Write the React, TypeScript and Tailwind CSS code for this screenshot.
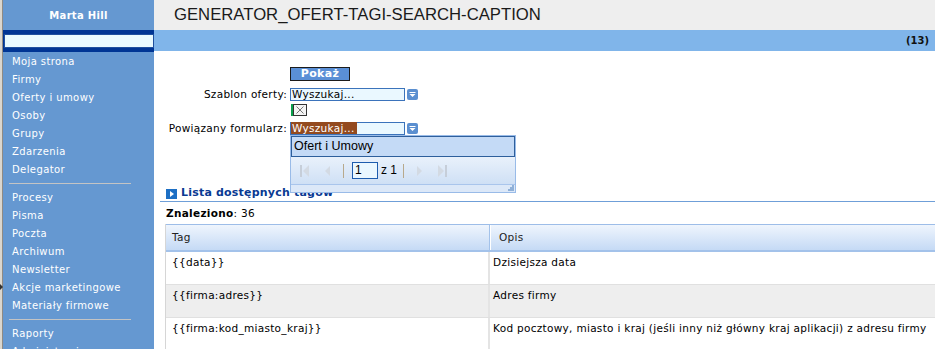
const sans = "font-['DejaVu_Sans',Verdana,sans-serif]";

const menu1 = ["Moja strona", "Firmy", "Oferty i umowy", "Osoby", "Grupy", "Zdarzenia", "Delegator"];
const menu2 = ["Procesy", "Pisma", "Poczta", "Archiwum", "Newsletter", "Akcje marketingowe", "Materiały firmowe"];
const menu3 = ["Raporty", "Administracja"];

const rows = [
  { tag: "{{data}}", opis: "Dzisiejsza data", bg: "bg-white" },
  { tag: "{{firma:adres}}", opis: "Adres firmy", bg: "bg-[#eeeeee]" },
  {
    tag: "{{firma:kod_miasto_kraj}}",
    opis: "Kod pocztowy, miasto i kraj (jeśli inny niż główny kraj aplikacji) z adresu firmy",
    bg: "bg-white",
  },
];

const MenuItem = ({ label }: { label: string }) => (
  <div className="h-[18px] shrink-0 flex items-center pl-[9px] text-white text-[10px] tracking-[0.4px]">{label}</div>
);

const Separator = () => (
  <div className="h-[10px] shrink-0 flex items-center">
    <div className="ml-[6px] w-[122px] h-px bg-[#c4c4c4]" />
  </div>
);

const Trigger = () => (
  <svg width="11" height="11" viewBox="0 0 11 11" className="ml-[2px]">
    <rect x="0" y="0" width="11" height="11" rx="2" fill="#5b8fd0" />
    <rect x="2.5" y="3" width="6" height="1" fill="#fff" />
    <path d="M2.5 5 L8.5 5 L5.5 8 Z" fill="#fff" />
  </svg>
);

const PagerIcon = ({ kind }: { kind: "first" | "prev" | "next" | "last" }) => (
  <svg width="12" height="14" viewBox="0 0 12 14">
    {kind === "first" && (
      <>
        <rect x="1" y="1" width="2" height="12" fill="#c6ced9" />
        <path d="M10 1 L4 7 L10 13 Z" fill="#d3dae3" />
      </>
    )}
    {kind === "prev" && <path d="M8 2 L3 7 L8 12 Z" fill="#d3dae3" />}
    {kind === "next" && <path d="M3 2 L8 7 L3 12 Z" fill="#d3dae3" />}
    {kind === "last" && (
      <>
        <path d="M2 1 L8 7 L2 13 Z" fill="#d3dae3" />
        <rect x="9" y="1" width="2" height="12" fill="#c6ced9" />
      </>
    )}
  </svg>
);

const Dropdown = () => (
  <div className="absolute left-[-1px] top-[12px] w-[226px] border border-[#99bbe8] bg-[#dfe8f6] z-10 tracking-normal">
    <div className="h-[21px] border border-[#2e5f9c] bg-[#c4daf6] flex items-center pl-[2px] font-['Liberation_Sans',Arial,sans-serif] text-[12.5px] text-black">
      Ofert i Umowy
    </div>
    <div className="h-[27px] bg-gradient-to-b from-[#e9f1fb] to-[#cfe0f5] flex items-center pl-[8px] font-['Liberation_Sans',Arial,sans-serif] text-[12px] text-black">
      <PagerIcon kind="first" />
      <div className="ml-[11px]">
        <PagerIcon kind="prev" />
      </div>
      <div className="ml-[9px] w-px h-[14px] bg-[#b8a98c]" />
      <div className="ml-[8px] w-[26px] h-[17px] border border-[#1d5cae] bg-[#eaf7ff] pl-[2px] leading-[15px]">1</div>
      <span className="ml-[3px]">z 1</span>
      <div className="ml-[6px] w-px h-[14px] bg-[#b8a98c]" />
      <div className="ml-[10px]">
        <PagerIcon kind="next" />
      </div>
      <div className="ml-[10px]">
        <PagerIcon kind="last" />
      </div>
    </div>
    <div className="h-[8px] border-t border-[#a9c5ec] bg-[#dce8f8] flex justify-end items-end pr-[1px] pb-[1px]">
      <svg width="6" height="6" viewBox="0 0 6 6">
        <rect x="4" y="0" width="2" height="2" fill="#8fb0d8" />
        <rect x="2" y="2" width="2" height="2" fill="#8fb0d8" />
        <rect x="4" y="2" width="2" height="2" fill="#8fb0d8" />
        <rect x="0" y="4" width="2" height="2" fill="#8fb0d8" />
        <rect x="2" y="4" width="2" height="2" fill="#8fb0d8" />
        <rect x="4" y="4" width="2" height="2" fill="#8fb0d8" />
      </svg>
    </div>
  </div>
);

export default function App() {
  return (
    <div className={`w-[935px] h-[349px] overflow-hidden flex ${sans}`}>
      {/* left strip */}
      <div className="relative w-[3px] shrink-0 bg-[#dad6ce] border-r border-[#8e8a84]">
        <svg className="absolute left-0 top-[284px]" width="3" height="6" viewBox="0 0 3 6">
          <path d="M0 0 L3 3 L0 6 Z" fill="#333" />
        </svg>
      </div>

      {/* sidebar */}
      <div className="w-[151px] shrink-0 bg-[#6598d1] flex flex-col">
        <div className="h-[30px] shrink-0 flex items-center justify-center text-white font-bold text-[10px] tracking-[0.3px]">
          Marta Hill
        </div>
        <div className="h-[22px] shrink-0 bg-[#003594] flex items-center pl-px">
          <div className="w-[150px] h-[14px] bg-[#e9faff] border border-[#1f4f9e]" />
        </div>
        {menu1.map((m) => (
          <MenuItem key={m} label={m} />
        ))}
        <Separator />
        {menu2.map((m) => (
          <MenuItem key={m} label={m} />
        ))}
        <Separator />
        {menu3.map((m) => (
          <MenuItem key={m} label={m} />
        ))}
      </div>

      {/* main */}
      <div className="flex-1 min-w-0 bg-white flex flex-col">
        <div className="h-[30px] shrink-0 bg-[#eeeeee] flex items-center pl-[20px] font-['Liberation_Sans',Arial,sans-serif] text-[16.7px] text-[#1a1a1a]">
          GENERATOR_OFERT-TAGI-SEARCH-CAPTION
        </div>
        <div className="h-[21px] shrink-0 bg-[#80b5ea] flex items-center justify-end pr-[6px] text-[10px] font-bold text-[#111]">
          (13)
        </div>

        {/* form */}
        <div className="pt-[16px] text-[10.5px] text-black tracking-[0.3px]">
          <div className="flex">
            <div className="w-[136px]" />
            <button className="w-[60px] h-[14px] bg-[#5a8fd6] border border-[#1b1b1b] text-white font-bold text-[11px] leading-[12px]">
              Pokaż
            </button>
          </div>

          <div className="flex items-center mt-[7px] h-[13px]">
            <div className="w-[133px] text-right">Szablon oferty:</div>
            <div className="ml-[3px] w-[115px] h-[13px] border border-[#3b73bb] bg-[#eaf8ff] pl-px leading-[11px]">
              Wyszukaj...
            </div>
            <Trigger />
          </div>

          <div className="flex mt-[3px] h-[12px]">
            <div className="w-[137px]" />
            <div className="w-[2px] h-[12px] bg-[#0aa04c]" />
            <div className="w-[14px] h-[12px] border border-[#333] bg-[#f4f4f4] flex items-center justify-center">
              <svg width="8" height="8" viewBox="0 0 8 8">
                <path d="M0.5 0.5 L7.5 7.5 M7.5 0.5 L0.5 7.5" stroke="#777" strokeWidth="1" />
              </svg>
            </div>
          </div>

          <div className="flex items-center mt-[6px] h-[13px]">
            <div className="w-[133px] text-right">Powiązany formularz:</div>
            <div className="relative ml-[3px] w-[115px] h-[13px] border border-[#3b73bb] bg-[#eaf8ff] leading-[11px]">
              <span className="bg-[#934a1f] text-white pl-px pr-[2px]">Wyszukaj...</span>
              <Dropdown />
            </div>
            <Trigger />
          </div>
        </div>

        {/* list */}
        <div className="pl-[6px]">
          <div className="mt-[51px] h-[16px] border-b border-[#6f9fd8] flex items-center">
            <svg width="11" height="10" viewBox="0 0 11 10" className="ml-[6px]">
              <rect x="0" y="0" width="11" height="10" fill="#1d6fc4" />
              <path d="M4 2 L8 5 L4 8 Z" fill="#fff" />
            </svg>
            <span className="ml-[4px] text-[11px] font-bold text-[#0a3a92] tracking-[0.2px]">Lista dostępnych tagów</span>
          </div>

          <div className="mt-[5px] ml-[6px] h-[13px] flex items-center text-[10.5px] text-black tracking-[0.3px]">
            <span className="font-bold">Znaleziono</span>
            <span>: 36</span>
          </div>

          <div className="mt-[4px] ml-[5px] border-l border-[#d6d6d6] text-[10.5px] text-black tracking-[0.3px]">
            <div className="grid grid-cols-[324px_1fr] h-[28px] border-t border-[#9dbde8] border-b-2 border-b-[#a3c2ea] bg-gradient-to-b from-[#eff5fd] to-[#c5daf5] text-[#222]">
              <div className="flex items-center pl-[6px] border-r border-[#a3c2ea]">Tag</div>
              <div className="flex items-center pl-[8px] border-l border-white">Opis</div>
            </div>
            {rows.map((r) => (
              <div key={r.tag} className={`grid grid-cols-[324px_1fr] h-[33px] border-b border-[#e0e0e0] ${r.bg}`}>
                <div className="pt-[3px] pl-[6px] border-r-2 border-[#e4e4e4] whitespace-nowrap">{r.tag}</div>
                <div className="pt-[3px] pl-[3px] whitespace-nowrap">{r.opis}</div>
              </div>
            ))}
          </div>
        </div>
      </div>
    </div>
  );
}
